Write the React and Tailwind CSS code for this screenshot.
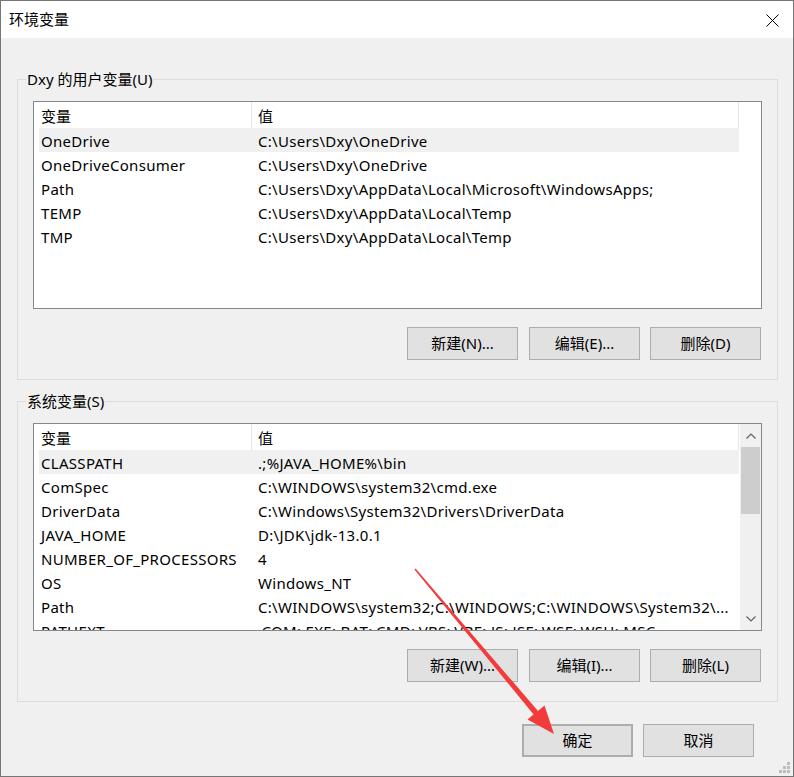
import React from "react";

const userRows = [
  ["OneDrive", String.raw`C:\Users\Dxy\OneDrive`],
  ["OneDriveConsumer", String.raw`C:\Users\Dxy\OneDrive`],
  ["Path", String.raw`C:\Users\Dxy\AppData\Local\Microsoft\WindowsApps;`],
  ["TEMP", String.raw`C:\Users\Dxy\AppData\Local\Temp`],
  ["TMP", String.raw`C:\Users\Dxy\AppData\Local\Temp`],
];

const sysRows = [
  ["CLASSPATH", String.raw`.;%JAVA_HOME%\bin`],
  ["ComSpec", String.raw`C:\WINDOWS\system32\cmd.exe`],
  ["DriverData", String.raw`C:\Windows\System32\Drivers\DriverData`],
  ["JAVA_HOME", String.raw`D:\JDK\jdk-13.0.1`],
  ["NUMBER_OF_PROCESSORS", "4"],
  ["OS", "Windows_NT"],
  ["Path", String.raw`C:\WINDOWS\system32;C:\WINDOWS;C:\WINDOWS\System32\...`],
  ["PATHEXT", ".COM;.EXE;.BAT;.CMD;.VBS;.VBE;.JS;.JSE;.WSF;.WSH;.MSC"],
];

function Header() {
  return (
    <div className="flex h-[26px] shrink-0">
      <div className="w-[218px] border-r border-[#e5e5e5] pl-[7px] pt-[3px] flex items-center">变量</div>
      <div className="w-[487px] border-r border-[#e5e5e5] pl-[6px] pt-[3px] flex items-center">值</div>
    </div>
  );
}

function Rows({ rows }) {
  return (
    <div className="flex flex-col">
      {rows.map(([k, v], i) => (
        <div
          key={k + i}
          className={
            "ml-[5px] w-[700px] h-[24px] shrink-0 flex items-center pt-[2px] whitespace-nowrap tracking-[0.3px] " +
            (i === 0 ? "bg-[#f0f0f0]" : "")
          }
        >
          <div className="w-[212px] pl-[2px] overflow-hidden">{k}</div>
          <div className="pl-[7px] overflow-hidden">{v}</div>
        </div>
      ))}
    </div>
  );
}

function Btn({ children, className = "" }) {
  return (
    <div
      className={
        "w-[111px] h-[33px] flex items-center justify-center bg-[#e1e1e1] border border-[#adadad] " +
        className
      }
    >
      {children}
    </div>
  );
}

function Group({ label, children }) {
  return (
    <div className="relative w-[761px] h-[301px] border border-[#dcdcdc] pt-[21px] pl-[15px]">
      <div className="absolute left-[8px] top-[-12px] px-[1px] bg-[#f0f0f0] leading-[22px]">{label}</div>
      {children}
    </div>
  );
}

export default function App() {
  return (
    <div className="relative w-[794px] h-[777px] bg-[#f0f0f0] border border-[#767676] overflow-hidden flex flex-col text-[15px] text-black font-['Noto_Sans','Noto_Sans_CJK_SC',sans-serif]">
      {/* title bar */}
      <div className="h-[37px] shrink-0 bg-white flex items-center justify-between pl-[8px] pr-[14px]">
        <span className="text-[15px]">环境变量</span>
        <svg width="13" height="13" viewBox="0 0 13 13" className="mt-[1px]">
          <path d="M0.5 0.5 L12.5 12.5 M12.5 0.5 L0.5 12.5" stroke="#000" strokeWidth="1" />
        </svg>
      </div>

      <div className="flex flex-col pl-[16px] pt-[41px]">
        <Group label="Dxy 的用户变量(U)">
          <div className="w-[729px] h-[208px] border border-[#828790] bg-white flex flex-col overflow-hidden">
            <Header />
            <Rows rows={userRows} />
          </div>
          <div className="flex mt-[18px] ml-[374px]">
            <Btn>新建(N)...</Btn>
            <Btn className="ml-[11px]">编辑(E)...</Btn>
            <Btn className="ml-[10px]">删除(D)</Btn>
          </div>
        </Group>

        <div className="mt-[21px]">
          <Group label="系统变量(S)">
            <div className="w-[729px] h-[208px] border border-[#828790] bg-white flex overflow-hidden">
              <div className="w-[706px] flex flex-col overflow-hidden">
                <Header />
                <Rows rows={sysRows} />
              </div>
              <div className="w-[21px] h-full bg-[#f0f0f0] flex flex-col items-center">
                <div className="h-[23px] w-full flex items-center justify-center">
                  <svg width="10" height="6" viewBox="0 0 10 6">
                    <path d="M0.5 5.5 L5 1 L9.5 5.5" fill="none" stroke="#606060" strokeWidth="1.2" />
                  </svg>
                </div>
                <div className="w-[19px] h-[67px] bg-[#cdcdcd]" />
                <div className="flex-1" />
                <div className="h-[23px] w-full flex items-center justify-center">
                  <svg width="10" height="6" viewBox="0 0 10 6">
                    <path d="M0.5 0.5 L5 5 L9.5 0.5" fill="none" stroke="#606060" strokeWidth="1.2" />
                  </svg>
                </div>
              </div>
            </div>
            <div className="flex mt-[18px] ml-[374px]">
              <Btn>新建(W)...</Btn>
              <Btn className="ml-[11px]">编辑(I)...</Btn>
              <Btn className="ml-[10px]">删除(L)</Btn>
            </div>
          </Group>
        </div>

        <div className="flex mt-[22px] ml-[505px]">
          <Btn className="border-2 border-[#0078d7]">确定</Btn>
          <Btn className="ml-[10px]">取消</Btn>
        </div>
      </div>

      {/* size grip */}
      <div className="absolute right-[3px] bottom-[3px] grid grid-cols-3 gap-[1px]">
        <div className="w-[3px] h-[3px]" />
        <div className="w-[3px] h-[3px]" />
        <div className="w-[3px] h-[3px] bg-[#bcbcbc]" />
        <div className="w-[3px] h-[3px]" />
        <div className="w-[3px] h-[3px] bg-[#bcbcbc]" />
        <div className="w-[3px] h-[3px] bg-[#bcbcbc]" />
        <div className="w-[3px] h-[3px] bg-[#bcbcbc]" />
        <div className="w-[3px] h-[3px] bg-[#bcbcbc]" />
        <div className="w-[3px] h-[3px] bg-[#bcbcbc]" />
      </div>

      {/* red annotation arrow */}
      <svg className="absolute left-0 top-0 pointer-events-none" width="794" height="777" viewBox="0 0 794 777">
        <polygon points="413.4,568.5 414.6,567.5 537,710 533,714" fill="#f23b3b" />
        <polygon points="553,733 526.5,718.5 543.5,704.5" fill="#f23b3b" />
      </svg>
    </div>
  );
}
